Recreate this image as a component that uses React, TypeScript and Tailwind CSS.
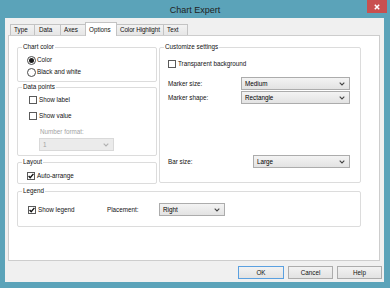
import React from 'react';

function Check({ checked }: { checked?: boolean }) {
  return (
    <span className="w-[8px] h-[8px] border border-[#5a5a5a] bg-white flex items-center justify-center shrink-0">
      {checked && (
        <svg width="6" height="6" viewBox="0 0 6 6">
          <path d="M0.6 3.1 L2.2 4.8 L5.4 0.9" stroke="#111" strokeWidth="1.4" fill="none" />
        </svg>
      )}
    </span>
  );
}

function Radio({ checked }: { checked?: boolean }) {
  return (
    <span className="w-[9px] h-[9px] rounded-full border border-[#4a4a4a] bg-white flex items-center justify-center shrink-0">
      {checked && <span className="w-[5px] h-[5px] rounded-full bg-[#1a1a1a]" />}
    </span>
  );
}

function Chevron({ color = '#444' }: { color?: string }) {
  return (
    <svg width="6" height="4" viewBox="0 0 6 4">
      <polyline points="0.7,0.7 3,3 5.3,0.7" stroke={color} strokeWidth="1.1" fill="none" />
    </svg>
  );
}

function Select({ value, className, disabled }: { value: string; className: string; disabled?: boolean }) {
  return (
    <div
      className={`h-[13px] border flex items-center justify-between pl-[3px] pr-[4px] shrink-0 ${className} ${
        disabled
          ? 'border-[#d9d9d9] bg-[#ebebeb] text-[#a3a3a3]'
          : 'border-[#acacac] bg-gradient-to-b from-[#f3f3f3] to-[#e3e3e3] text-black'
      }`}
    >
      <span className="leading-[8px]">{value}</span>
      <Chevron color={disabled ? '#b0b0b0' : '#444'} />
    </div>
  );
}

function Group({ label, className, children }: { label: string; className: string; children?: React.ReactNode }) {
  return (
    <div className={`relative border border-[#dcdcdc] rounded-[2px] ${className}`}>
      <span className="absolute left-[4px] top-[-5px] px-[1px] bg-white leading-[8px] text-[#111]">{label}</span>
      {children}
    </div>
  );
}

function Tab({ label, className, active }: { label: string; className: string; active?: boolean }) {
  if (active) {
    return (
      <div className={`relative z-10 -ml-px h-[14px] -mb-px bg-white border-l border-r border-t border-[#c3c3c3] flex items-center pl-[3px] ${className}`}>
        <span className="leading-[8px]">{label}</span>
      </div>
    );
  }
  return (
    <div className={`-ml-px h-[11px] border-l border-r border-t border-[#c3c3c3] bg-gradient-to-b from-[#f2f2f2] to-[#e6e6e6] flex items-center pl-[3px] first:ml-0 whitespace-nowrap ${className}`}>
      <span className="leading-[8px]">{label}</span>
    </div>
  );
}

function Button({ label, className }: { label: string; className: string }) {
  return (
    <div className={`h-[13px] border bg-gradient-to-b from-[#f2f2f2] to-[#e3e3e3] flex items-center justify-center ${className}`}>
      <span className="leading-[8px]">{label}</span>
    </div>
  );
}

export default function App() {
  return (
    <div className="w-[390px] h-[288px] bg-[#5ba3b9] flex flex-col font-['Liberation_Sans',Arial,sans-serif] text-[6.3px] text-[#111] overflow-hidden">
      <div className="h-[18px] shrink-0 flex items-start">
        <div className="w-[23px]" />
        <div className="flex-1 flex justify-center pt-[5px]">
          <span className="text-[9px] leading-[10px] text-[#222]">Chart Expert</span>
        </div>
        <div className="w-[20px] h-[13px] mr-[3px] bg-[#c9504f] flex items-center justify-center">
          <svg width="6" height="6" viewBox="0 0 6 6">
            <path d="M0.8 0.8 L5.2 5.2 M5.2 0.8 L0.8 5.2" stroke="#fff" strokeWidth="1.5" />
          </svg>
        </div>
      </div>

      <div className="ml-[5px] w-[379px] h-[264px] bg-[#f0f0f0] flex flex-col">
        <div className="flex items-end h-[13px] mt-[4px] ml-[5px]">
          <Tab label="Type" className="w-[25px]" />
          <Tab label="Data" className="w-[27px] pl-[4px]" />
          <Tab label="Axes" className="w-[26px]" />
          <Tab label="Options" className="w-[32px]" active />
          <Tab label="Color Highlight" className="w-[48px] pl-[2px] tracking-[-0.1px]" />
          <Tab label="Text" className="w-[25px]" />
        </div>

        <div className="ml-[3px] w-[372px] h-[226px] border border-[#cdcdcd] bg-white pl-[8px] pt-[11px]">
          <div className="flex gap-[2px]">
            <div className="w-[140px] flex flex-col">
              <Group label="Chart color" className="h-[35px] pl-[9px] pt-[6px]">
                <div className="h-[12px] flex items-center gap-[1px]">
                  <Radio checked />
                  <span className="leading-[8px]">Color</span>
                </div>
                <div className="h-[12px] flex items-center gap-[1px]">
                  <Radio />
                  <span className="leading-[8px]">Black and white</span>
                </div>
              </Group>

              <Group label="Data points" className="mt-[5px] h-[69px] pl-[11px] pt-[6px]">
                <div className="h-[12px] flex items-center gap-[2px]">
                  <Check />
                  <span className="leading-[8px]">Show label</span>
                </div>
                <div className="mt-[4px] h-[12px] flex items-center gap-[2px]">
                  <Check />
                  <span className="leading-[8px]">Show value</span>
                </div>
                <div className="pl-[10px]">
                  <div className="mt-[6px] h-[8px] leading-[8px] text-[#a3a3a3] pl-[1px]">Number format:</div>
                  <Select value="1" className="mt-[2px] w-[75px]" disabled />
                </div>
              </Group>

              <Group label="Layout" className="mt-[6px] h-[22px] pl-[9px] pt-[7px]">
                <div className="h-[12px] flex items-center gap-[2px]">
                  <Check checked />
                  <span className="leading-[8px]">Auto-arrange</span>
                </div>
              </Group>
            </div>

            <Group label="Customize settings" className="w-[202px] h-[136px] pl-[8px] pt-[10px] pr-[10px] pb-[14px] flex flex-col">
              <div className="h-[12px] flex items-center gap-[2px]">
                <Check />
                <span className="leading-[8px]">Transparent background</span>
              </div>
              <div className="mt-[7px] flex items-center">
                <span className="w-[73px] leading-[8px]">Marker size:</span>
                <Select value="Medium" className="w-[109px]" />
              </div>
              <div className="mt-[1px] flex items-center">
                <span className="w-[73px] leading-[8px]">Marker shape:</span>
                <Select value="Rectangle" className="w-[109px]" />
              </div>
              <div className="mt-auto flex items-center">
                <span className="w-[85px] leading-[8px]">Bar size:</span>
                <Select value="Large" className="w-[97px]" />
              </div>
            </Group>
          </div>

          <Group label="Legend" className="mt-[7px] w-[344px] h-[36px] pl-[10px] pt-[11px]">
            <div className="h-[13px] flex items-center">
              <Check checked />
              <span className="ml-[2px] w-[69px] leading-[8px]">Show legend</span>
              <span className="w-[52px] leading-[8px]">Placement:</span>
              <Select value="Right" className="w-[66px]" />
            </div>
          </Group>
        </div>

        <div className="mt-[5px] flex justify-end gap-[4px] pr-[2px]">
          <Button label="OK" className="w-[46px] border-[#5aa0e0]" />
          <Button label="Cancel" className="w-[45px] border-[#acacac]" />
          <Button label="Help" className="w-[45px] border-[#acacac]" />
        </div>
      </div>
    </div>
  );
}
